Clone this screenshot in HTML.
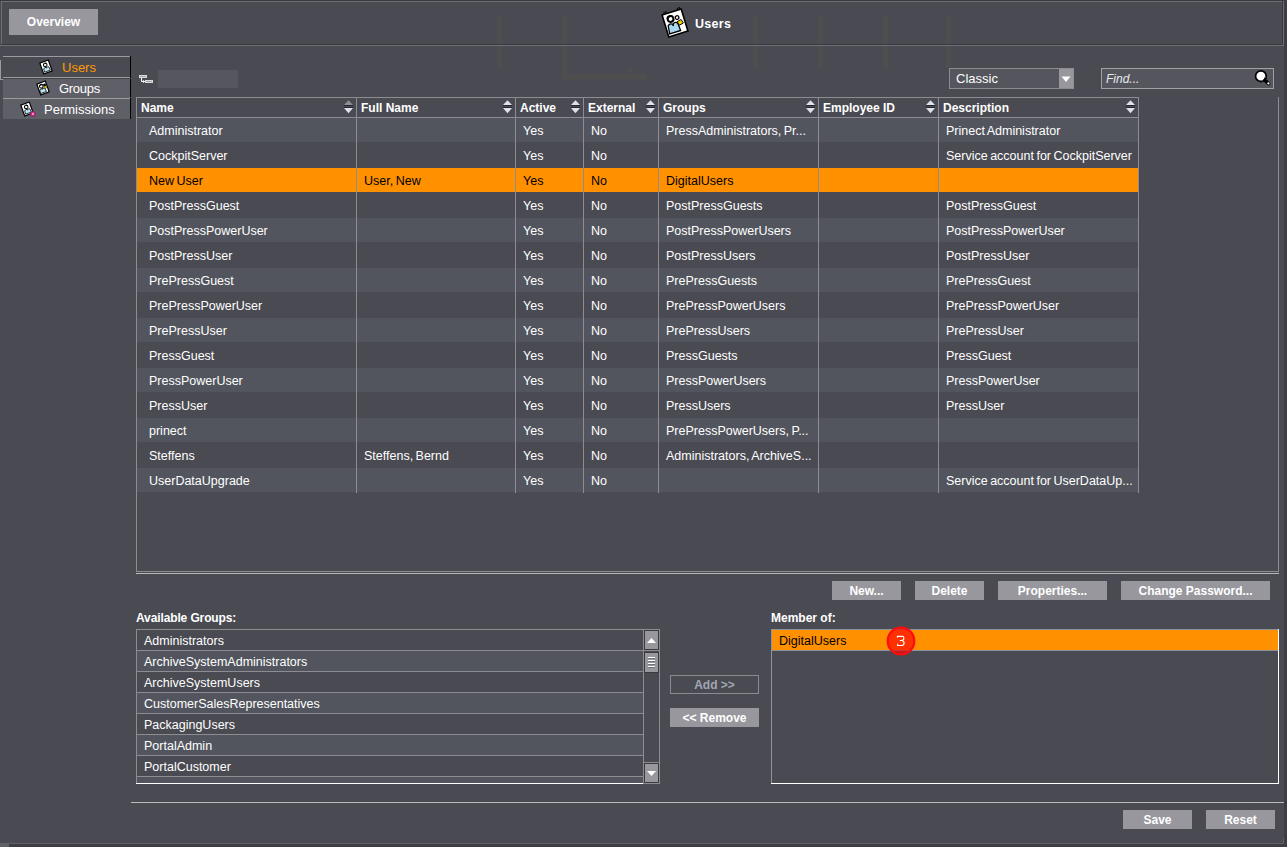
<!DOCTYPE html>
<html><head><meta charset="utf-8"><style>
html,body{margin:0;padding:0;}
body{width:1287px;height:847px;overflow:hidden;background:#4a4a52;position:relative;font-family:"Liberation Sans", sans-serif;}
body>div,body>span,body>svg{position:absolute;display:block;}
span{white-space:nowrap;}
</style></head><body>
<div style="left:1284px;top:0px;width:3px;height:847px;background:#3d3d43"></div>
<div style="left:0px;top:844px;width:1287px;height:3px;background:#3d3d43"></div>
<div style="left:0px;top:843px;width:1284px;height:1px;background:#606068"></div>
<div style="left:0px;top:844px;width:9px;height:3px;background:#606068"></div>
<div style="left:1283px;top:838px;width:1px;height:6px;background:#606068"></div>
<div style="left:497px;top:16px;width:5px;height:51px;background:#4e4e4f"></div>
<div style="left:562px;top:16px;width:5px;height:59px;background:#4e4e4f"></div>
<div style="left:753px;top:16px;width:5px;height:51px;background:#4e4e4f"></div>
<div style="left:818px;top:16px;width:5px;height:51px;background:#4e4e4f"></div>
<div style="left:883px;top:16px;width:5px;height:51px;background:#4e4e4f"></div>
<div style="left:946px;top:16px;width:5px;height:51px;background:#4e4e4f"></div>
<div style="left:563px;top:74px;width:84px;height:6px;background:#4e4e4f"></div>
<div style="left:627px;top:68px;width:5px;height:4px;background:#4e4e4f"></div>
<div style="left:0px;top:0px;width:1284px;height:1px;background:#38383e"></div>
<div style="left:1px;top:1px;width:1282px;height:1px;background:#6e6e76"></div>
<div style="left:1px;top:1px;width:1px;height:43px;background:#6e6e76"></div>
<div style="left:1282px;top:1px;width:1px;height:44px;background:#38383e"></div>
<div style="left:1px;top:44px;width:1282px;height:1px;background:#38383e"></div>
<div style="left:0px;top:45px;width:1284px;height:1px;background:#6e6e76"></div>
<div style="left:1283px;top:1px;width:1px;height:45px;background:#6e6e76"></div>
<div style="left:9px;top:9px;width:89px;height:26px;background:#97979d"></div>
<span style="left:9px;top:15px;width:89px;text-align:center;font-weight:bold;font-size:12px;line-height:14px;color:#fff">Overview</span>
<svg style="left:658px;top:5px" width="36" height="36" viewBox="0 0 36 36">
<g transform="rotate(-17 17 18)">
<rect x="7" y="6.5" width="20" height="23" fill="#fff" stroke="#000" stroke-width="1.6"/>
<path d="M9 6 l1 -2 M11 6 l1 -2 M23 6 l1 -2 M25 6 l1 -2" stroke="#000" stroke-width="1"/>
<path d="M8.8 26.8 L9.6 18.8 Q12 16.4 14.2 18.4 L14.6 20.4 L15 18.4 Q17.4 16.4 19.6 18.8 L20.2 26.8 Z" fill="#a8d8f0" stroke="#000" stroke-width="1.3"/>
<circle cx="13.9" cy="12.9" r="2.9" fill="#fff" stroke="#000" stroke-width="2"/><path d="M11 12 A3 3 0 0 1 16.8 12" stroke="#000" stroke-width="1.6" fill="none"/>
<circle cx="20.6" cy="13.4" r="1.8" fill="#fff" stroke="#000" stroke-width="1.3"/>
<path d="M19.4 17.4 L23.8 16.4 L25 20.4 L20.6 21.4 Z" fill="#f2d400" stroke="#000" stroke-width="0.9"/>
</g></svg>
<span style="left:695px;top:17px;letter-spacing:0.3px;font-weight:bold;font-size:12.5px;line-height:15px;color:#fff">Users</span>
<div style="left:3px;top:56px;width:127px;height:1px;background:#9a9aa0"></div>
<div style="left:0px;top:60px;width:1px;height:20px;background:#9a9aa0"></div>
<div style="left:0px;top:79px;width:3px;height:1px;background:#9a9aa0"></div>
<div style="left:3px;top:77px;width:127px;height:1px;background:#9a9aa0"></div>
<div style="left:3px;top:78px;width:127px;height:1px;background:#424248"></div>
<div style="left:3px;top:79px;width:127px;height:19px;background:#5f5f67"></div>
<div style="left:3px;top:98px;width:127px;height:1px;background:#9a9aa0"></div>
<div style="left:3px;top:99px;width:127px;height:20px;background:#5f5f67"></div>
<div style="left:130px;top:56px;width:1px;height:22px;background:#000"></div>
<div style="left:130px;top:79px;width:1px;height:18px;background:#000"></div>
<div style="left:130px;top:98px;width:1px;height:21px;background:#000"></div>
<svg style="left:36.65px;top:57.70px" width="18" height="18" viewBox="0 0 18 18">
<g transform="translate(9 9) rotate(-20)">
<rect x="-4.5" y="-5.7" width="9" height="11.4" fill="#fff" stroke="#000" stroke-width="1.2"/>
<path d="M-3.0 4.4 L-2.8 0.8 Q0.0 -0.5 2.8 0.8 L3.0 4.4 Z" fill="#b8e6f8" stroke="#000" stroke-width="0.7"/>
<path d="M-0.6 0.2 L0.0 1.8 L0.6 0.2 Z" fill="#000"/>
<circle cx="0.0" cy="-2.3" r="1.8" fill="#fff" stroke="#000" stroke-width="1.0"/>
<path d="M-1.6 -3.0 Q0.0 -4.6 1.6 -3.0" fill="none" stroke="#000" stroke-width="0.9"/>
</g></svg>
<svg style="left:33.60px;top:78.85px" width="18" height="18" viewBox="0 0 18 18">
<g transform="translate(9 9) rotate(-20)">
<rect x="-4.5" y="-5.7" width="9" height="11.4" fill="#fff" stroke="#000" stroke-width="1.2"/>
<circle cx="2.4" cy="-2.2" r="1.5" fill="#000"/><path d="M-4.0 4.4 L-3.8 0.8 Q-1.0 -0.5 1.8 0.8 L2.0 4.4 Z" fill="#b8e6f8" stroke="#000" stroke-width="0.7"/>
<path d="M-1.6 0.2 L-1.0 1.8 L-0.4 0.2 Z" fill="#000"/>
<circle cx="-1.0" cy="-2.3" r="1.8" fill="#fff" stroke="#000" stroke-width="1.0"/>
<path d="M-2.6 -3.0 Q-1.0 -4.6 0.6 -3.0" fill="none" stroke="#000" stroke-width="0.9"/><circle cx="2.6" cy="-0.1" r="1.3" fill="#f0d000" stroke="#000" stroke-width="0.4"/>
</g></svg>
<svg style="left:17.70px;top:99.65px" width="18" height="18" viewBox="0 0 18 18">
<g transform="translate(9 9) rotate(-20)">
<rect x="-4.5" y="-5.7" width="9" height="11.4" fill="#fff" stroke="#000" stroke-width="1.2"/>
<path d="M-3.0 4.4 L-2.8 0.8 Q0.0 -0.5 2.8 0.8 L3.0 4.4 Z" fill="#b8e6f8" stroke="#000" stroke-width="0.7"/>
<path d="M-0.6 0.2 L0.0 1.8 L0.6 0.2 Z" fill="#000"/>
<circle cx="0.0" cy="-2.3" r="1.8" fill="#fff" stroke="#000" stroke-width="1.0"/>
<path d="M-1.6 -3.0 Q0.0 -4.6 1.6 -3.0" fill="none" stroke="#000" stroke-width="0.9"/>
</g><circle cx="14.90" cy="13.95" r="2.6" fill="#d81e84" stroke="#404046" stroke-width="0.5"/><circle cx="14.90" cy="13.95" r="1.1" fill="#f4a0d0"/></svg>
<span style="left:62px;top:60px;font-size:13px;line-height:15px;color:#ff9c00">Users</span>
<span style="left:59px;top:81px;letter-spacing:-0.3px;font-size:13px;line-height:15px;color:#fff">Groups</span>
<span style="left:44px;top:102px;font-size:13px;line-height:15px;color:#fff">Permissions</span>
<svg style="left:137px;top:73px" width="18" height="12" viewBox="0 0 18 12">
<rect x="2" y="2" width="8" height="3" fill="#d8dadc"/><rect x="3" y="3" width="6" height="1" fill="#a4a8ac"/>
<path d="M4.5 5 V8.5 H8" stroke="#fff" stroke-width="1" fill="none"/><path d="M6.5 7.3 V9.7" stroke="#fff" stroke-width="1"/>
<rect x="8" y="7" width="8" height="3" fill="#d8dadc"/><rect x="9" y="8" width="6" height="1" fill="#a4a8ac"/>
</svg>
<div style="left:158px;top:70px;width:80px;height:18px;background:#56565e"></div>
<div style="left:949px;top:68px;width:125px;height:21px;background:#55555d;box-shadow:inset 0 0 0 1px #8c8c92"></div>
<div style="left:1059px;top:69px;width:14px;height:19px;background:#97979d"></div>
<svg style="left:1061px;top:76px" width="10" height="7" viewBox="0 0 10 7"><path d="M0.5 0.5 H9.5 L5 6 Z" fill="#fff"/></svg>
<span style="left:956px;top:71px;font-size:13px;line-height:15px;color:#fff">Classic</span>
<div style="left:1101px;top:68px;width:173px;height:21px;background:#55555d;box-shadow:inset 0 0 0 1px #a0a0a6"></div>
<span style="left:1106px;top:72px;font-size:12px;line-height:14px;color:#e8e8ec;font-style:italic">Find...</span>
<svg style="left:1254px;top:70px" width="18" height="16" viewBox="0 0 18 16">
<path d="M10.2 9.8 L14.6 13.6" stroke="#000" stroke-width="3.4" stroke-linecap="round"/>
<circle cx="6.9" cy="6.2" r="5.3" fill="#fff" stroke="#000" stroke-width="1.7"/>
<path d="M11.4 7.8 A5.4 5.4 0 0 1 6 11.6" stroke="#000" stroke-width="1.8" fill="none"/>
<path d="M11.2 6.6 L10.6 8.2 M8.8 10.6 L7.4 11.0" stroke="#6a8c9c" stroke-width="0.9"/>
<circle cx="14.4" cy="13.4" r="1.1" fill="#fff"/>
</svg>
<div style="left:136px;top:97px;width:1px;height:475px;background:#8c8c92"></div>
<div style="left:1278px;top:97px;width:1px;height:475px;background:#8c8c92"></div>
<div style="left:136px;top:571px;width:1143px;height:1px;background:#8c8c92"></div>
<div style="left:136px;top:97px;width:1003px;height:1px;background:#8c8c92"></div>
<div style="left:136px;top:573px;width:1143px;height:1px;background:#b8b8be"></div>
<div style="left:137px;top:117px;width:1001px;height:1px;background:#8c8c92"></div>
<div style="left:137px;top:118px;width:1001px;height:24px;background:#52555d"></div>
<span style="left:149px;top:124px;font-size:12.5px;line-height:14px;word-spacing:-1px;color:#fff">Administrator</span>
<span style="left:523px;top:124px;font-size:12.5px;line-height:14px;word-spacing:-1px;color:#fff">Yes</span>
<span style="left:591px;top:124px;font-size:12.5px;line-height:14px;word-spacing:-1px;color:#fff">No</span>
<span style="left:666px;top:124px;font-size:12.5px;line-height:14px;word-spacing:-1px;color:#fff">PressAdministrators, Pr...</span>
<span style="left:946px;top:124px;font-size:12.5px;line-height:14px;word-spacing:-1px;color:#fff">Prinect Administrator</span>
<span style="left:149px;top:149px;font-size:12.5px;line-height:14px;word-spacing:-1px;color:#fff">CockpitServer</span>
<span style="left:523px;top:149px;font-size:12.5px;line-height:14px;word-spacing:-1px;color:#fff">Yes</span>
<span style="left:591px;top:149px;font-size:12.5px;line-height:14px;word-spacing:-1px;color:#fff">No</span>
<span style="left:946px;top:149px;font-size:12.5px;line-height:14px;word-spacing:-1px;color:#fff">Service account for CockpitServer</span>
<div style="left:137px;top:168px;width:1001px;height:24px;background:#ff9000"></div>
<span style="left:149px;top:174px;font-size:12.5px;line-height:14px;word-spacing:-1px;color:#000">New User</span>
<span style="left:364px;top:174px;font-size:12.5px;line-height:14px;word-spacing:-1px;color:#000">User, New</span>
<span style="left:523px;top:174px;font-size:12.5px;line-height:14px;word-spacing:-1px;color:#000">Yes</span>
<span style="left:591px;top:174px;font-size:12.5px;line-height:14px;word-spacing:-1px;color:#000">No</span>
<span style="left:666px;top:174px;font-size:12.5px;line-height:14px;word-spacing:-1px;color:#000">DigitalUsers</span>
<span style="left:149px;top:199px;font-size:12.5px;line-height:14px;word-spacing:-1px;color:#fff">PostPressGuest</span>
<span style="left:523px;top:199px;font-size:12.5px;line-height:14px;word-spacing:-1px;color:#fff">Yes</span>
<span style="left:591px;top:199px;font-size:12.5px;line-height:14px;word-spacing:-1px;color:#fff">No</span>
<span style="left:666px;top:199px;font-size:12.5px;line-height:14px;word-spacing:-1px;color:#fff">PostPressGuests</span>
<span style="left:946px;top:199px;font-size:12.5px;line-height:14px;word-spacing:-1px;color:#fff">PostPressGuest</span>
<div style="left:137px;top:218px;width:1001px;height:24px;background:#52555d"></div>
<span style="left:149px;top:224px;font-size:12.5px;line-height:14px;word-spacing:-1px;color:#fff">PostPressPowerUser</span>
<span style="left:523px;top:224px;font-size:12.5px;line-height:14px;word-spacing:-1px;color:#fff">Yes</span>
<span style="left:591px;top:224px;font-size:12.5px;line-height:14px;word-spacing:-1px;color:#fff">No</span>
<span style="left:666px;top:224px;font-size:12.5px;line-height:14px;word-spacing:-1px;color:#fff">PostPressPowerUsers</span>
<span style="left:946px;top:224px;font-size:12.5px;line-height:14px;word-spacing:-1px;color:#fff">PostPressPowerUser</span>
<span style="left:149px;top:249px;font-size:12.5px;line-height:14px;word-spacing:-1px;color:#fff">PostPressUser</span>
<span style="left:523px;top:249px;font-size:12.5px;line-height:14px;word-spacing:-1px;color:#fff">Yes</span>
<span style="left:591px;top:249px;font-size:12.5px;line-height:14px;word-spacing:-1px;color:#fff">No</span>
<span style="left:666px;top:249px;font-size:12.5px;line-height:14px;word-spacing:-1px;color:#fff">PostPressUsers</span>
<span style="left:946px;top:249px;font-size:12.5px;line-height:14px;word-spacing:-1px;color:#fff">PostPressUser</span>
<div style="left:137px;top:268px;width:1001px;height:24px;background:#52555d"></div>
<span style="left:149px;top:274px;font-size:12.5px;line-height:14px;word-spacing:-1px;color:#fff">PrePressGuest</span>
<span style="left:523px;top:274px;font-size:12.5px;line-height:14px;word-spacing:-1px;color:#fff">Yes</span>
<span style="left:591px;top:274px;font-size:12.5px;line-height:14px;word-spacing:-1px;color:#fff">No</span>
<span style="left:666px;top:274px;font-size:12.5px;line-height:14px;word-spacing:-1px;color:#fff">PrePressGuests</span>
<span style="left:946px;top:274px;font-size:12.5px;line-height:14px;word-spacing:-1px;color:#fff">PrePressGuest</span>
<span style="left:149px;top:299px;font-size:12.5px;line-height:14px;word-spacing:-1px;color:#fff">PrePressPowerUser</span>
<span style="left:523px;top:299px;font-size:12.5px;line-height:14px;word-spacing:-1px;color:#fff">Yes</span>
<span style="left:591px;top:299px;font-size:12.5px;line-height:14px;word-spacing:-1px;color:#fff">No</span>
<span style="left:666px;top:299px;font-size:12.5px;line-height:14px;word-spacing:-1px;color:#fff">PrePressPowerUsers</span>
<span style="left:946px;top:299px;font-size:12.5px;line-height:14px;word-spacing:-1px;color:#fff">PrePressPowerUser</span>
<div style="left:137px;top:318px;width:1001px;height:24px;background:#52555d"></div>
<span style="left:149px;top:324px;font-size:12.5px;line-height:14px;word-spacing:-1px;color:#fff">PrePressUser</span>
<span style="left:523px;top:324px;font-size:12.5px;line-height:14px;word-spacing:-1px;color:#fff">Yes</span>
<span style="left:591px;top:324px;font-size:12.5px;line-height:14px;word-spacing:-1px;color:#fff">No</span>
<span style="left:666px;top:324px;font-size:12.5px;line-height:14px;word-spacing:-1px;color:#fff">PrePressUsers</span>
<span style="left:946px;top:324px;font-size:12.5px;line-height:14px;word-spacing:-1px;color:#fff">PrePressUser</span>
<span style="left:149px;top:349px;font-size:12.5px;line-height:14px;word-spacing:-1px;color:#fff">PressGuest</span>
<span style="left:523px;top:349px;font-size:12.5px;line-height:14px;word-spacing:-1px;color:#fff">Yes</span>
<span style="left:591px;top:349px;font-size:12.5px;line-height:14px;word-spacing:-1px;color:#fff">No</span>
<span style="left:666px;top:349px;font-size:12.5px;line-height:14px;word-spacing:-1px;color:#fff">PressGuests</span>
<span style="left:946px;top:349px;font-size:12.5px;line-height:14px;word-spacing:-1px;color:#fff">PressGuest</span>
<div style="left:137px;top:368px;width:1001px;height:24px;background:#52555d"></div>
<span style="left:149px;top:374px;font-size:12.5px;line-height:14px;word-spacing:-1px;color:#fff">PressPowerUser</span>
<span style="left:523px;top:374px;font-size:12.5px;line-height:14px;word-spacing:-1px;color:#fff">Yes</span>
<span style="left:591px;top:374px;font-size:12.5px;line-height:14px;word-spacing:-1px;color:#fff">No</span>
<span style="left:666px;top:374px;font-size:12.5px;line-height:14px;word-spacing:-1px;color:#fff">PressPowerUsers</span>
<span style="left:946px;top:374px;font-size:12.5px;line-height:14px;word-spacing:-1px;color:#fff">PressPowerUser</span>
<span style="left:149px;top:399px;font-size:12.5px;line-height:14px;word-spacing:-1px;color:#fff">PressUser</span>
<span style="left:523px;top:399px;font-size:12.5px;line-height:14px;word-spacing:-1px;color:#fff">Yes</span>
<span style="left:591px;top:399px;font-size:12.5px;line-height:14px;word-spacing:-1px;color:#fff">No</span>
<span style="left:666px;top:399px;font-size:12.5px;line-height:14px;word-spacing:-1px;color:#fff">PressUsers</span>
<span style="left:946px;top:399px;font-size:12.5px;line-height:14px;word-spacing:-1px;color:#fff">PressUser</span>
<div style="left:137px;top:418px;width:1001px;height:24px;background:#52555d"></div>
<span style="left:149px;top:424px;font-size:12.5px;line-height:14px;word-spacing:-1px;color:#fff">prinect</span>
<span style="left:523px;top:424px;font-size:12.5px;line-height:14px;word-spacing:-1px;color:#fff">Yes</span>
<span style="left:591px;top:424px;font-size:12.5px;line-height:14px;word-spacing:-1px;color:#fff">No</span>
<span style="left:666px;top:424px;font-size:12.5px;line-height:14px;word-spacing:-1px;color:#fff">PrePressPowerUsers, P...</span>
<span style="left:149px;top:449px;font-size:12.5px;line-height:14px;word-spacing:-1px;color:#fff">Steffens</span>
<span style="left:364px;top:449px;font-size:12.5px;line-height:14px;word-spacing:-1px;color:#fff">Steffens, Bernd</span>
<span style="left:523px;top:449px;font-size:12.5px;line-height:14px;word-spacing:-1px;color:#fff">Yes</span>
<span style="left:591px;top:449px;font-size:12.5px;line-height:14px;word-spacing:-1px;color:#fff">No</span>
<span style="left:666px;top:449px;font-size:12.5px;line-height:14px;word-spacing:-1px;color:#fff">Administrators, ArchiveS...</span>
<div style="left:137px;top:468px;width:1001px;height:24px;background:#52555d"></div>
<span style="left:149px;top:474px;font-size:12.5px;line-height:14px;word-spacing:-1px;color:#fff">UserDataUpgrade</span>
<span style="left:523px;top:474px;font-size:12.5px;line-height:14px;word-spacing:-1px;color:#fff">Yes</span>
<span style="left:591px;top:474px;font-size:12.5px;line-height:14px;word-spacing:-1px;color:#fff">No</span>
<span style="left:946px;top:474px;font-size:12.5px;line-height:14px;word-spacing:-1px;color:#fff">Service account for UserDataUp...</span>
<div style="left:356px;top:98px;width:1px;height:395px;background:#8c8c92"></div>
<div style="left:515px;top:98px;width:1px;height:395px;background:#8c8c92"></div>
<div style="left:583px;top:98px;width:1px;height:395px;background:#8c8c92"></div>
<div style="left:658px;top:98px;width:1px;height:395px;background:#8c8c92"></div>
<div style="left:818px;top:98px;width:1px;height:395px;background:#8c8c92"></div>
<div style="left:938px;top:98px;width:1px;height:395px;background:#8c8c92"></div>
<div style="left:1138px;top:98px;width:1px;height:395px;background:#8c8c92"></div>
<span style="left:141px;top:101px;font-weight:bold;font-size:12px;line-height:14px;color:#fff">Name</span>
<svg style="left:342px;top:99px" width="12" height="16" viewBox="0 0 12 16">
<path d="M2 6 L6.5 1.3 L11 6 Z" fill="#8e8e94"/><rect x="2" y="6" width="9" height="1" fill="#26262c"/>
<rect x="2" y="8" width="9" height="1" fill="#26262c"/><path d="M2 9 L6.5 14.3 L11 9 Z" fill="#dde1ea"/>
</svg>
<span style="left:361px;top:101px;font-weight:bold;font-size:12px;line-height:14px;color:#fff">Full Name</span>
<svg style="left:501px;top:99px" width="12" height="16" viewBox="0 0 12 16">
<path d="M2 6 L6.5 1.3 L11 6 Z" fill="#dde1ea"/><rect x="2" y="6" width="9" height="1" fill="#26262c"/>
<rect x="2" y="8" width="9" height="1" fill="#26262c"/><path d="M2 9 L6.5 14.3 L11 9 Z" fill="#dde1ea"/>
</svg>
<span style="left:520px;top:101px;font-weight:bold;font-size:12px;line-height:14px;color:#fff">Active</span>
<svg style="left:569px;top:99px" width="12" height="16" viewBox="0 0 12 16">
<path d="M2 6 L6.5 1.3 L11 6 Z" fill="#dde1ea"/><rect x="2" y="6" width="9" height="1" fill="#26262c"/>
<rect x="2" y="8" width="9" height="1" fill="#26262c"/><path d="M2 9 L6.5 14.3 L11 9 Z" fill="#dde1ea"/>
</svg>
<span style="left:588px;top:101px;font-weight:bold;font-size:12px;line-height:14px;color:#fff">External</span>
<svg style="left:644px;top:99px" width="12" height="16" viewBox="0 0 12 16">
<path d="M2 6 L6.5 1.3 L11 6 Z" fill="#dde1ea"/><rect x="2" y="6" width="9" height="1" fill="#26262c"/>
<rect x="2" y="8" width="9" height="1" fill="#26262c"/><path d="M2 9 L6.5 14.3 L11 9 Z" fill="#dde1ea"/>
</svg>
<span style="left:663px;top:101px;font-weight:bold;font-size:12px;line-height:14px;color:#fff">Groups</span>
<svg style="left:804px;top:99px" width="12" height="16" viewBox="0 0 12 16">
<path d="M2 6 L6.5 1.3 L11 6 Z" fill="#dde1ea"/><rect x="2" y="6" width="9" height="1" fill="#26262c"/>
<rect x="2" y="8" width="9" height="1" fill="#26262c"/><path d="M2 9 L6.5 14.3 L11 9 Z" fill="#dde1ea"/>
</svg>
<span style="left:823px;top:101px;font-weight:bold;font-size:12px;line-height:14px;color:#fff">Employee ID</span>
<svg style="left:924px;top:99px" width="12" height="16" viewBox="0 0 12 16">
<path d="M2 6 L6.5 1.3 L11 6 Z" fill="#dde1ea"/><rect x="2" y="6" width="9" height="1" fill="#26262c"/>
<rect x="2" y="8" width="9" height="1" fill="#26262c"/><path d="M2 9 L6.5 14.3 L11 9 Z" fill="#dde1ea"/>
</svg>
<span style="left:943px;top:101px;font-weight:bold;font-size:12px;line-height:14px;color:#fff">Description</span>
<svg style="left:1124px;top:99px" width="12" height="16" viewBox="0 0 12 16">
<path d="M2 6 L6.5 1.3 L11 6 Z" fill="#dde1ea"/><rect x="2" y="6" width="9" height="1" fill="#26262c"/>
<rect x="2" y="8" width="9" height="1" fill="#26262c"/><path d="M2 9 L6.5 14.3 L11 9 Z" fill="#dde1ea"/>
</svg>
<div style="left:832px;top:581px;width:69px;height:19px;background:#97979d"></div>
<span style="left:832px;top:584px;width:69px;text-align:center;font-weight:bold;font-size:12px;line-height:14px;color:#fff">New...</span>
<div style="left:915px;top:581px;width:69px;height:19px;background:#97979d"></div>
<span style="left:915px;top:584px;width:69px;text-align:center;font-weight:bold;font-size:12px;line-height:14px;color:#fff">Delete</span>
<div style="left:998px;top:581px;width:109px;height:19px;background:#97979d"></div>
<span style="left:998px;top:584px;width:109px;text-align:center;font-weight:bold;font-size:12px;line-height:14px;color:#fff">Properties...</span>
<div style="left:1121px;top:581px;width:149px;height:19px;background:#97979d"></div>
<span style="left:1121px;top:584px;width:149px;text-align:center;font-weight:bold;font-size:12px;line-height:14px;color:#fff">Change Password...</span>
<span style="left:136px;top:611px;letter-spacing:-0.12px;font-weight:bold;font-size:12px;line-height:14px;color:#fff">Available Groups:</span>
<span style="left:771px;top:611px;font-weight:bold;font-size:12px;line-height:14px;color:#fff">Member of:</span>
<div style="left:136px;top:629px;width:524px;height:155px;background:#4a4a52"></div>
<div style="left:137px;top:650px;width:506px;height:1px;background:#8c8c92"></div>
<span style="left:144px;top:634px;font-size:12.5px;line-height:14px;color:#fff">Administrators</span>
<div style="left:137px;top:651px;width:506px;height:20px;background:#52555d"></div>
<div style="left:137px;top:671px;width:506px;height:1px;background:#8c8c92"></div>
<span style="left:144px;top:655px;font-size:12.5px;line-height:14px;color:#fff">ArchiveSystemAdministrators</span>
<div style="left:137px;top:692px;width:506px;height:1px;background:#8c8c92"></div>
<span style="left:144px;top:676px;font-size:12.5px;line-height:14px;color:#fff">ArchiveSystemUsers</span>
<div style="left:137px;top:693px;width:506px;height:20px;background:#52555d"></div>
<div style="left:137px;top:713px;width:506px;height:1px;background:#8c8c92"></div>
<span style="left:144px;top:697px;font-size:12.5px;line-height:14px;color:#fff">CustomerSalesRepresentatives</span>
<div style="left:137px;top:734px;width:506px;height:1px;background:#8c8c92"></div>
<span style="left:144px;top:718px;font-size:12.5px;line-height:14px;color:#fff">PackagingUsers</span>
<div style="left:137px;top:735px;width:506px;height:20px;background:#52555d"></div>
<div style="left:137px;top:755px;width:506px;height:1px;background:#8c8c92"></div>
<span style="left:144px;top:739px;font-size:12.5px;line-height:14px;color:#fff">PortalAdmin</span>
<div style="left:137px;top:776px;width:506px;height:1px;background:#8c8c92"></div>
<span style="left:144px;top:760px;font-size:12.5px;line-height:14px;color:#fff">PortalCustomer</span>
<div style="left:137px;top:777px;width:506px;height:6px;background:#52555d"></div>
<div style="left:136px;top:629px;width:524px;height:1px;background:#8c8c92"></div>
<div style="left:136px;top:629px;width:1px;height:155px;background:#8c8c92"></div>
<div style="left:136px;top:783px;width:507px;height:1px;background:#fff"></div>
<div style="left:643px;top:630px;width:1px;height:154px;background:#8c8c92"></div>
<div style="left:659px;top:629px;width:1px;height:155px;background:#8c8c92"></div>
<div style="left:643px;top:783px;width:17px;height:1px;background:#8c8c92"></div>
<div style="left:644px;top:630px;width:15px;height:20px;background:#3a3a40"></div>
<div style="left:645px;top:631px;width:13px;height:18px;background:#97979d"></div>
<div style="left:643px;top:650px;width:17px;height:1px;background:#8c8c92"></div>
<div style="left:644px;top:651px;width:15px;height:111px;background:#4a4a52"></div>
<div style="left:644px;top:652px;width:15px;height:21px;background:#3a3a40"></div>
<div style="left:645px;top:653px;width:13px;height:19px;background:#97979d"></div>
<div style="left:648px;top:657px;width:7px;height:1px;background:#fff"></div>
<div style="left:648px;top:658px;width:7px;height:1px;background:#6c7480"></div>
<div style="left:648px;top:660px;width:7px;height:1px;background:#fff"></div>
<div style="left:648px;top:661px;width:7px;height:1px;background:#6c7480"></div>
<div style="left:648px;top:663px;width:7px;height:1px;background:#fff"></div>
<div style="left:648px;top:664px;width:7px;height:1px;background:#6c7480"></div>
<div style="left:648px;top:666px;width:7px;height:1px;background:#fff"></div>
<div style="left:648px;top:667px;width:7px;height:1px;background:#6c7480"></div>
<div style="left:643px;top:762px;width:17px;height:1px;background:#8c8c92"></div>
<div style="left:644px;top:763px;width:15px;height:20px;background:#3a3a40"></div>
<div style="left:645px;top:764px;width:13px;height:18px;background:#97979d"></div>
<svg style="left:646px;top:637px" width="11" height="7" viewBox="0 0 11 7"><path d="M1 6 H10 L5.5 1 Z" fill="#fff"/></svg>
<svg style="left:646px;top:770px" width="11" height="7" viewBox="0 0 11 7"><path d="M1 1 H10 L5.5 6 Z" fill="#fff"/></svg>
<div style="left:670px;top:675px;width:89px;height:19px;box-shadow:inset 0 0 0 1px #8a8a90"></div>
<span style="left:670px;top:678px;width:89px;text-align:center;font-weight:bold;font-size:12px;line-height:14px;color:#a0a6b4">Add &gt;&gt;</span>
<div style="left:670px;top:708px;width:89px;height:19px;background:#97979d"></div>
<span style="left:670px;top:711px;width:89px;text-align:center;font-weight:bold;font-size:12px;line-height:14px;color:#fff">&lt;&lt; Remove</span>
<div style="left:771px;top:629px;width:508px;height:1px;background:#8a94a2"></div>
<div style="left:771px;top:629px;width:1px;height:155px;background:#8a94a2"></div>
<div style="left:1278px;top:629px;width:1px;height:155px;background:#fff"></div>
<div style="left:771px;top:783px;width:508px;height:1px;background:#fff"></div>
<div style="left:772px;top:630px;width:506px;height:20px;background:#ff9000"></div>
<div style="left:772px;top:650px;width:506px;height:1px;background:#8a94a2"></div>
<span style="left:779px;top:634px;font-size:12.5px;line-height:14px;color:#000">DigitalUsers</span>
<svg style="left:885px;top:625px" width="32" height="32" viewBox="0 0 32 32">
<circle cx="16" cy="16" r="13.2" fill="rgba(255,0,0,0.66)"/>
<circle cx="16" cy="16" r="13.3" fill="none" stroke="#ff0c0c" stroke-width="2.2"/>
<g transform="translate(-885 -625)" fill="none" stroke="#fff" stroke-width="1.15">
<path d="M897.4 637.8 V636.3 H902.6 Q903.9 636.5 903.9 638.3 Q903.9 640.4 901.4 640.5 H899.8 M901.4 640.5 Q904.1 640.7 904.1 643 Q904.1 645.5 901.4 645.5 H897.6 V643.8"/>
</g>
</svg>
<div style="left:131px;top:802px;width:1153px;height:1px;background:#b8b8be"></div>
<div style="left:1123px;top:810px;width:69px;height:19px;background:#97979d"></div>
<span style="left:1123px;top:813px;width:69px;text-align:center;font-weight:bold;font-size:12px;line-height:14px;color:#fff">Save</span>
<div style="left:1206px;top:810px;width:69px;height:19px;background:#97979d"></div>
<span style="left:1206px;top:813px;width:69px;text-align:center;font-weight:bold;font-size:12px;line-height:14px;color:#fff">Reset</span>
</body></html>
